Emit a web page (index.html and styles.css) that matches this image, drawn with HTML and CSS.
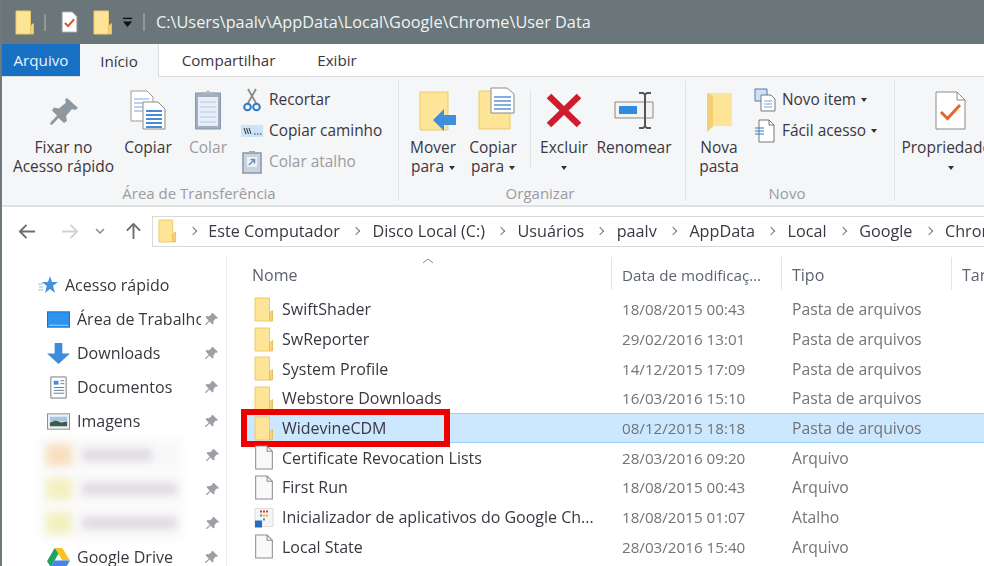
FILE: index.html
```html
<!DOCTYPE html>
<html lang="pt">
<head>
<meta charset="utf-8">
<title>User Data</title>
<link rel="stylesheet" href="styles.css">
</head>
<body>
<svg class="defs" width="0" height="0">
  <symbol id="folder" viewBox="0 0 20 24">
    <path d="M1 .5h14.500v23H1z" fill="#fde497" stroke="#eccb6c"/>
    <path d="M15.500 15.500l3-2.500v10.500h-3z" fill="#f5d478" stroke="#e6c162"/>
  </symbol>
  <symbol id="file" viewBox="0 0 18 24">
    <path d="M1 1h11l5 5v17H1z" fill="#f9f9f9" stroke="#8c8c8c"/>
    <path d="M12 1v5h5" fill="none" stroke="#8c8c8c"/>
  </symbol>
  <symbol id="pin" viewBox="0 0 16 16">
    <path d="M9.500 1l5.500 5.500-1.500.7-1-.4-2.500 3 .2 2.600-1.200 1L5.800 10 2 14l-1-1 4-3.800L1.700 5.500l1-1.200 2.600.2 3-2.500-.4-1z" fill="#9aa0a6"/>
  </symbol>
</svg>

<header class="titlebar">
  <svg class="tb-folder-a"><use href="#folder"/></svg>
  <span class="tb-sep"></span>
  <svg class="tb-doc" viewBox="0 0 18 24"><path d="M1 1h11l5 5v17H1z" fill="#fff" stroke="#aaa"/><path d="M4 13l3.500 3.500L14 9" fill="none" stroke="#d9532c" stroke-width="2.200"/></svg>
  <svg class="tb-folder-b"><use href="#folder"/></svg>
  <svg class="tb-drop" viewBox="0 0 12 12"><path d="M1 1.500h10" stroke="#111" stroke-width="1.500"/><path d="M1 5h10l-5 6z" fill="#111"/></svg>
  <span class="tb-sep tb-sep-b"></span>
  <span class="tb-path">C:\Users\paalv\AppData\Local\Google\Chrome\User Data</span>
</header>

<nav class="tabs">
  <span class="tab tab-file">Arquivo</span>
  <span class="tab tab-active">Início</span>
  <span class="tab tab-share">Compartilhar</span>
  <span class="tab tab-view">Exibir</span>
</nav>

<section class="ribbon">
  <div class="group group-clip">
    <div class="group-body">
      <div class="big big-pin">
        <svg class="ic-pin" viewBox="0 0 30 28"><path d="M18 1l11 10-3 2-3-1-6 7 1 5-3 2-5.500-5L4 27l-2 1-1-1 1-2 6-6.500-5-5 2-3 5 1 7-6-1-3z" fill="#8f979e"/></svg>
        <span class="big-label">Fixar no<br>Acesso rápido</span>
      </div>
      <div class="big big-copy">
        <svg class="ic-copy" viewBox="0 0 36 40"><path d="M1 1h16l6 6v24H1z" fill="#fff" stroke="#9b9b9b"/><g stroke="#a9c4e8" stroke-width="1.500"><path d="M4 9h15M4 13h15M4 17h15M4 21h15"/></g><path d="M13 12h15l7 7v20H13z" fill="#fff" stroke="#8a8a8a"/><g stroke="#4a89d8" stroke-width="2"><path d="M16 21h16M16 25h16M16 29h16M16 33h16M16 37h16"/></g></svg>
        <span class="big-label">Copiar</span>
      </div>
      <div class="big big-paste">
        <svg class="ic-paste" viewBox="0 0 28 41"><path d="M1.500 4h25v36h-25z" fill="#9fb0c4" stroke="#8597ad"/><path d="M4 8h20v29H4z" fill="#e9eef6"/><g stroke="#c9d6e6" stroke-width="1.500"><path d="M6 13h16M6 18h16M6 23h16M6 28h16M6 33h16"/></g><path d="M8 5V3h4l2-2 2 2h4v2z" fill="#b5b5b5"/></svg>
        <span class="big-label">Colar</span>
      </div>
      <div class="small-col">
        <div class="small">
          <svg class="icon-sm" viewBox="0 0 22 24"><path d="M7 1l8 14M15 1L7 15" stroke="#8a8a8a" stroke-width="1.800" fill="none"/><circle cx="6.500" cy="19" r="3.300" fill="none" stroke="#2b7cc4" stroke-width="2"/><circle cx="15.500" cy="19" r="3.300" fill="none" stroke="#2b7cc4" stroke-width="2"/></svg>
          <span>Recortar</span>
        </div>
        <div class="small">
          <svg class="icon-sm" viewBox="0 0 22 24"><rect width="22" height="12" y="6" fill="#cfe2f5"/><path d="M3 9l2 6M5.500 9l2 6M8 9l2 6" stroke="#234" fill="none"/><path d="M13 15h1.500M16 15h1.500M19 15h1.500" stroke="#234"/></svg>
          <span>Copiar caminho</span>
        </div>
        <div class="small muted">
          <svg class="icon-sm" viewBox="0 0 22 24"><path d="M2 3h18v20H2z" fill="#c8d3e0" stroke="#8597ad" stroke-width="1.500"/><path d="M8 3V1h6v2z" fill="#aaa"/><path d="M6 7h10v10H6z" fill="#eef2f7"/><path d="M8 15l5-5M9.500 9.500h4v4" stroke="#6c8bb0" fill="none" stroke-width="1.500"/></svg>
          <span>Colar atalho</span>
        </div>
      </div>
    </div>
    <div class="group-name name-clip">Área de Transferência</div>
  </div>

  <div class="group group-org">
    <div class="group-body">
      <div class="big big-move">
        <svg class="ic-move" viewBox="0 0 37 40"><path d="M1 1h28v38H1z" fill="#fde497" stroke="#eccb6c"/><path d="M25 18v6h12v10H25v6L14 29z" fill="#3e8fde"/></svg>
        <span class="big-label">Mover<br>para <i class="caret"></i></span>
      </div>
      <div class="big big-copyto">
        <svg class="ic-copyto" viewBox="0 0 38 43"><path d="M1 4h31v38H1z" fill="#fde497" stroke="#eccb6c"/><path d="M13 1h16l7 6v19H13z" fill="#fff" stroke="#8a8a8a"/><g stroke="#5b93d8" stroke-width="1.500"><path d="M16 10h17M16 14h17M16 18h17M16 22h17"/></g></svg>
        <span class="big-label">Copiar<br>para <i class="caret"></i></span>
      </div>
      <span class="vsep"></span>
      <div class="big big-del">
        <svg class="ic-del" viewBox="0 0 36 35"><path d="M3 3l30 29M33 3L3 32" stroke="#cf1d2d" stroke-width="6.500"/></svg>
        <span class="big-label">Excluir<br><i class="caret"></i></span>
      </div>
      <div class="big big-ren">
        <svg class="ic-ren" viewBox="0 0 40 37"><path d="M1 10h38v16H1z" fill="#f3f3f3" stroke="#888"/><path d="M5 14h18v8H5z" fill="#2f8be0"/><path d="M25 1h4l2 1.500L33 1h4M31 2v33M25 36h4l2-1.500 2 1.500h4" stroke="#555" stroke-width="2" fill="none"/></svg>
        <span class="big-label">Renomear</span>
      </div>
    </div>
    <div class="group-name name-org">Organizar</div>
  </div>

  <div class="group group-new">
    <div class="group-body">
      <div class="big big-newf">
        <svg class="ic-newf" viewBox="0 0 26 39"><path d="M1 0h25v33H7l-6 6z" fill="#fde497"/><path d="M1 0l6 3v30l-6 6z" fill="#f3cf73"/></svg>
        <span class="big-label">Nova<br>pasta</span>
      </div>
      <div class="small-col">
        <div class="small">
          <svg class="icon-sm" viewBox="0 0 22 24"><path d="M1 1h12v12H1z" fill="#cfe2f5" stroke="#4b7fb8"/><path d="M7 7h10l4 4v12H7z" fill="#fff" stroke="#777"/><path d="M10 13h8M10 16h8M10 19h8" stroke="#7aa4d8"/></svg>
          <span>Novo item <i class="caret"></i></span>
        </div>
        <div class="small">
          <svg class="icon-sm" viewBox="0 0 22 24"><path d="M5 1h10l5 5v17H5z" fill="#fff" stroke="#777"/><path d="M15 1v5h5" fill="none" stroke="#777"/><path d="M1 9h9M1 12h9M1 15h9" stroke="#2b7cc4"/></svg>
          <span>Fácil acesso <i class="caret"></i></span>
        </div>
      </div>
    </div>
    <div class="group-name name-new">Novo</div>
  </div>

  <div class="group group-open">
    <div class="group-body">
      <div class="big big-props">
        <svg class="ic-props" viewBox="0 0 31 39"><path d="M1 1h21l8 8v29H1z" fill="#fff" stroke="#8a8a8a"/><path d="M22 1v8h8" fill="none" stroke="#8a8a8a"/><path d="M6 21l6.500 6.500L25 14" fill="none" stroke="#e4682a" stroke-width="3"/></svg>
        <span class="big-label">Propriedades<br><i class="caret"></i></span>
      </div>
    </div>
  </div>
</section>

<section class="addressbar">
  <svg class="nav nav-back" viewBox="0 0 18 16"><path d="M1 8h16M8 1L1 8l7 7" fill="none" stroke="#6d6d6d" stroke-width="2"/></svg>
  <svg class="nav nav-fwd" viewBox="0 0 18 16"><path d="M17 8H1M10 1l7 7-7 7" fill="none" stroke="#d2d2d2" stroke-width="2"/></svg>
  <svg class="nav-chev" viewBox="0 0 10 6"><path d="M1 1l4 4 4-4" fill="none" stroke="#8a8a8a" stroke-width="1.500"/></svg>
  <svg class="nav nav-up" viewBox="0 0 16 18"><path d="M8 17V1M1 8l7-7 7 7" fill="none" stroke="#6d6d6d" stroke-width="2"/></svg>
  <div class="crumbs">
    <svg class="crumb-folder"><use href="#folder"/></svg>
    <i class="gt"></i><span>Este Computador</span>
    <i class="gt"></i><span>Disco Local (C:)</span>
    <i class="gt"></i><span>Usuários</span>
    <i class="gt"></i><span>paalv</span>
    <i class="gt"></i><span>AppData</span>
    <i class="gt"></i><span>Local</span>
    <i class="gt"></i><span>Google</span>
    <i class="gt"></i><span>Chrome</span>
  </div>
</section>

<main class="content">
  <aside class="sidebar">
    <div class="side-head">
      <svg class="side-star" viewBox="0 0 20 18"><path d="M12 0l2 6h6l-5 3.800L17 17l-5-4-5 4 1.800-7L4 6h6z" fill="#3f92e0"/><path d="M0 8h5M1 11h4M0 14h5" stroke="#8dbdea"/></svg>
      <span>Acesso rápido</span>
    </div>
    <div class="side-item">
      <svg class="side-icon" viewBox="0 0 24 18"><rect width="23" height="16" x=".5" y="1" fill="#2a94ee" stroke="#1d6fb8"/><path d="M2 15h20" stroke="#a8d4f7"/></svg>
      <span class="side-label">Área de Trabalho</span>
      <svg class="side-pin"><use href="#pin"/></svg>
    </div>
    <div class="side-item">
      <svg class="side-icon" viewBox="0 0 24 24"><path d="M8 1h8v11h8L12 23 0 12h8z" fill="#3c8ddb"/></svg>
      <span class="side-label">Downloads</span>
      <svg class="side-pin"><use href="#pin"/></svg>
    </div>
    <div class="side-item">
      <svg class="side-icon" viewBox="0 0 24 24"><path d="M4 1h16v22H4z" fill="#fff" stroke="#777"/><path d="M7 5h5v4H7z" fill="#4a89d8"/><path d="M14 5h4M14 8h4M7 12h11M7 15h11M7 18h11" stroke="#5d7f9e"/></svg>
      <span class="side-label">Documentos</span>
      <svg class="side-pin"><use href="#pin"/></svg>
    </div>
    <div class="side-item">
      <svg class="side-icon" viewBox="0 0 24 18"><rect x=".5" y="1" width="23" height="16" fill="#eef2f5" stroke="#8a8a8a"/><path d="M3 4h18v5H3z" fill="#a5c8e6"/><path d="M3 10l6-2 6 2 6-1v5H3z" fill="#3f5a4c"/></svg>
      <span class="side-label">Imagens</span>
      <svg class="side-pin"><use href="#pin"/></svg>
    </div>
    <div class="side-item side-blur">
      <span class="blur-area"><span class="blur-swatch blur-orange"></span><span class="blur-text blur-a"></span></span>
      <svg class="side-pin"><use href="#pin"/></svg>
    </div>
    <div class="side-item side-blur">
      <span class="blur-area"><span class="blur-swatch blur-yellow"></span><span class="blur-text blur-b"></span></span>
      <svg class="side-pin"><use href="#pin"/></svg>
    </div>
    <div class="side-item side-blur">
      <span class="blur-area"><span class="blur-swatch blur-yellow"></span><span class="blur-text blur-b"></span></span>
      <svg class="side-pin"><use href="#pin"/></svg>
    </div>
    <div class="side-item">
      <svg class="side-icon" viewBox="0 0 24 22"><path d="M8 1h8l8 13h-8z" fill="#f7c325"/><path d="M8 1L0 15l4 6 8-14z" fill="#1fa463"/><path d="M4 21h16l4-7H8z" fill="#4285f4"/></svg>
      <span class="side-label">Google Drive</span>
      <svg class="side-pin"><use href="#pin"/></svg>
    </div>
  </aside>

  <section class="list">
    <div class="list-head">
      <span class="col col-name">Nome<svg class="sort" viewBox="0 0 12 6"><path d="M1 5l5-4 5 4" fill="none" stroke="#8a8a8a"/></svg></span>
      <span class="col col-date">Data de modificaç…</span>
      <span class="col col-type">Tipo</span>
      <span class="col col-size">Tar</span>
    </div>
    <div class="row"><svg class="row-icon"><use href="#folder"/></svg><span class="c-name">SwiftShader</span><span class="c-date">18/08/2015 00:43</span><span class="c-type">Pasta de arquivos</span></div>
    <div class="row"><svg class="row-icon"><use href="#folder"/></svg><span class="c-name">SwReporter</span><span class="c-date">29/02/2016 13:01</span><span class="c-type">Pasta de arquivos</span></div>
    <div class="row"><svg class="row-icon"><use href="#folder"/></svg><span class="c-name">System Profile</span><span class="c-date">14/12/2015 17:09</span><span class="c-type">Pasta de arquivos</span></div>
    <div class="row"><svg class="row-icon"><use href="#folder"/></svg><span class="c-name">Webstore Downloads</span><span class="c-date">16/03/2016 15:10</span><span class="c-type">Pasta de arquivos</span></div>
    <div class="row row-selected"><svg class="row-icon"><use href="#folder"/></svg><span class="c-name">WidevineCDM</span><span class="c-date">08/12/2015 18:18</span><span class="c-type">Pasta de arquivos</span><span class="red-box"></span></div>
    <div class="row"><svg class="row-icon"><use href="#file"/></svg><span class="c-name">Certificate Revocation Lists</span><span class="c-date">28/03/2016 09:20</span><span class="c-type">Arquivo</span></div>
    <div class="row"><svg class="row-icon"><use href="#file"/></svg><span class="c-name">First Run</span><span class="c-date">18/08/2015 00:43</span><span class="c-type">Arquivo</span></div>
    <div class="row"><svg class="row-icon" viewBox="0 0 20 24"><rect x="1" y="3" width="18" height="18" fill="#f5f5f5" stroke="#ddd"/><g fill="#d9372c"><rect x="6" y="5" width="2" height="2"/><rect x="9" y="5" width="2" height="2"/><rect x="12" y="5" width="2" height="2"/></g><g fill="#f2b01e"><rect x="9" y="9" width="2" height="2"/><rect x="12" y="9" width="2" height="2"/></g><g fill="#3c8ddb"><rect x="6" y="9" width="2" height="2"/><rect x="9" y="13" width="2" height="2"/></g><path d="M1 15h7v7H1z" fill="#2b6cc4"/></svg><span class="c-name">Inicializador de aplicativos do Google Ch...</span><span class="c-date">18/08/2015 01:07</span><span class="c-type">Atalho</span></div>
    <div class="row"><svg class="row-icon"><use href="#file"/></svg><span class="c-name">Local State</span><span class="c-date">28/03/2016 15:40</span><span class="c-type">Arquivo</span></div>
  </section>
</main>
</body>
</html>
```

FILE: styles.css
```css
* { box-sizing: border-box; }
html, body { margin: 0; height: 100%; }
body {
  width: 984px; height: 566px; overflow: hidden; background: #fff; color: #3b3640;
  font-family: "Open Sans", "Noto Sans", "Liberation Sans", sans-serif;
  font-size: 16px; line-height: 20px;
  border-left: 2px solid #6d797d;
  filter: blur(.35px);
}
svg { display: block; flex: none; }
.defs { position: absolute; }

.titlebar { height: 44px; margin-left: -2px; background: #6a767a; display: flex; align-items: center; padding-left: 15px; }
.tb-folder-a { width: 20px; height: 25px; }
.tb-sep { width: 2px; height: 17px; background: #8e989b; margin-left: 9px; margin-right: 15px; }
.tb-doc { width: 17px; height: 22px; }
.tb-folder-b { width: 20px; height: 25px; margin-left: 15px; }
.tb-drop { width: 11px; height: 11px; margin-left: 9px; }
.tb-sep-b { margin-left: 10px; margin-right: 11px; height: 18px; }
.tb-path { color: #f1f3f3; font-size: 16.300px; white-space: nowrap; }

.tabs { height: 33px; margin-left: -2px; display: flex; background: #fff; border-bottom: 1px solid #dadbdc; }
.tab { display: flex; align-items: center; justify-content: center; font-size: 15.200px; }
.tab-file { margin-left: 2px; width: 78px; background: #1870c2; color: #e9f2fa; }
.tab-active { width: 79px; background: #f5f6f7; margin-bottom: -1px; border-right: 1px solid #dadbdc; }
.tab-share { margin-left: 22px; width: 95px; }
.tab-view { margin-left: 41px; width: 40px; }

.ribbon { height: 130px; display: flex; background: #f5f6f7; border-bottom: 2px solid #dfe0e1; padding-left: 3px; overflow: hidden; }
.group { display: flex; flex: none; flex-direction: column; border-right: 1px solid #e2e3e4; height: 120px; margin-top: 4px; }
.group-clip { width: 394px; padding-left: 7px; }
.group-org { width: 287px; padding-left: 8px; }
.group-new { width: 209px; padding-left: 10px; }
.group-open { padding-left: 7px; border-right: 0; }
.group-body { flex: 1; display: flex; }
.group-name { height: 20px; line-height: 24px; text-align: center; color: #9b9ba0; font-size: 15px; }
.name-clip, .name-org { margin-right: 12px; }
.name-new { margin-right: 16px; }
.big { display: flex; flex-direction: column; align-items: center; text-align: center; color: #3b3640; font-size: 15.500px; line-height: 19px; white-space: nowrap; }
.big-label { margin-top: 1px; }
.muted { color: #9b9ba0; }
.big-pin { width: 103px; }
.big-copy { width: 52px; margin-left: 7px; }
.big-paste { width: 42px; margin-left: 13px; color: #9b9ba0; }
.ic-pin { width: 30px; height: 28px; margin-top: 16px; margin-bottom: 12px; }
.ic-copy { width: 36px; height: 40px; margin-top: 9px; margin-bottom: 7px; }
.ic-paste { width: 28px; height: 41px; margin-top: 8px; margin-bottom: 7px; }
.ic-move { width: 37px; height: 40px; margin-top: 10px; margin-bottom: 6px; margin-left: 9px; }
.ic-copyto { width: 38px; height: 43px; margin-top: 6px; margin-bottom: 7px; margin-left: 8px; }
.ic-del { width: 36px; height: 35px; margin-top: 12px; margin-bottom: 9px; }
.ic-ren { width: 40px; height: 37px; margin-top: 11px; margin-bottom: 8px; }
.ic-newf { width: 26px; height: 39px; margin-top: 12px; margin-bottom: 5px; }
.ic-props { width: 31px; height: 39px; margin-top: 10px; margin-bottom: 7px; }
.small-col { margin-left: 12px; display: flex; flex-direction: column; gap: 10px; padding-top: 8px; font-size: 15.400px; }
.small { display: flex; align-items: center; gap: 6px; height: 21px; white-space: nowrap; }
.icon-sm { width: 22px; height: 24px; }
.caret { display: inline-block; border: 3.500px solid transparent; border-top: 4px solid #333; border-bottom: 0; vertical-align: middle; margin-left: 1px; }
.big-move { width: 52px; }
.big-copyto { width: 52px; margin-left: 8px; }
.vsep { width: 1px; height: 78px; background: #e2e3e4; margin: 9px 8px 0 11px; }
.big-del { width: 50px; }
.big-ren { width: 76px; margin-left: 7px; }
.big-newf { width: 46px; }
.big-props { width: 96px; }

.addressbar { height: 48px; display: flex; align-items: center; }
.nav { width: 17px; height: 17px; }
.nav-back { margin-left: 17px; }
.nav-fwd { margin-left: 25px; }
.nav-chev { width: 10px; height: 6px; margin-left: 17px; }
.nav-up { margin-left: 20px; }
.crumbs { flex: 1; min-width: 0; height: 31px; margin-left: 10px; border: 1px solid #d9d9d9; border-right: 0; display: flex; align-items: center; padding-left: 5px; white-space: nowrap; overflow: hidden; font-size: 16.200px; padding-bottom: 1px; }
.crumb-folder { width: 19px; height: 24px; flex: none; }
.gt { width: 6px; height: 6px; border-top: 1.500px solid #777; border-right: 1.500px solid #777; transform: rotate(45deg); margin: 0 13.300px; flex: none; }
.gt:first-of-type { margin-right: 12px; }

.content { display: flex; height: 311px; }
.sidebar { width: 225px; flex: none; padding-left: 36px; padding-top: 14px; border-right: 1px solid #eceded; overflow: hidden; }
.side-head { display: flex; align-items: center; height: 34px; gap: 7px; margin-top: -1px; }
.side-star { width: 20px; height: 18px; }
.side-item { display: flex; align-items: center; height: 34px; padding-left: 9px; }
.side-icon { width: 23px; height: 23px; }
.side-label { width: 124px; margin-left: 7px; overflow: hidden; white-space: nowrap; }
.side-pin { width: 15px; height: 15px; margin-left: 3px; }
.side-blur { padding-left: 0; }
.blur-area { display: flex; align-items: center; width: 142px; height: 34px; margin-right: 20px; background: #faf9fa; filter: blur(4px); margin-left: 2px; }
.blur-swatch { width: 26px; height: 22px; margin-left: 6px; }
.blur-orange { background: #f9dfbe; }
.blur-yellow { background: #f3f1c0; }
.blur-text { height: 12px; background: #dedae0; margin-left: 10px; }
.blur-a { width: 70px; }
.blur-b { width: 95px; }

.list { flex: 1; min-width: 0; padding-left: 15px; }
.list-head { height: 39.500px; display: flex; color: #5c6370; align-items: flex-start; padding-top: 2px; }
.col { display: block; height: 33px; line-height: 36px; padding-left: 10px; border-right: 1px solid #e5e5e5; white-space: nowrap; overflow: hidden; position: relative; }
.col-name { width: 370px; }
.col-date { width: 170px; font-size: 15.200px; }
.col-type { width: 170px; }
.col-size { flex: 1; border: 0; }
.sort { width: 12px; height: 6px; position: absolute; left: 180px; top: 1px; }
.row { height: 29.700px; display: flex; align-items: center; position: relative; padding-left: 12px; white-space: nowrap; }
.row-icon { width: 20px; height: 25px; }
.c-name { width: 340px; margin-left: 8px; overflow: hidden; }
.c-date { width: 170px; color: #737378; font-size: 15.200px; }
.c-type { color: #737378; font-size: 15.700px; }
.row-selected { background: #cce8ff; border: 1px solid #99d1ff; border-right: 0; padding-left: 11px; }
.red-box { position: absolute; left: -2px; top: -5px; width: 209px; height: 38px; border: 6px solid #ee0000; }
```
